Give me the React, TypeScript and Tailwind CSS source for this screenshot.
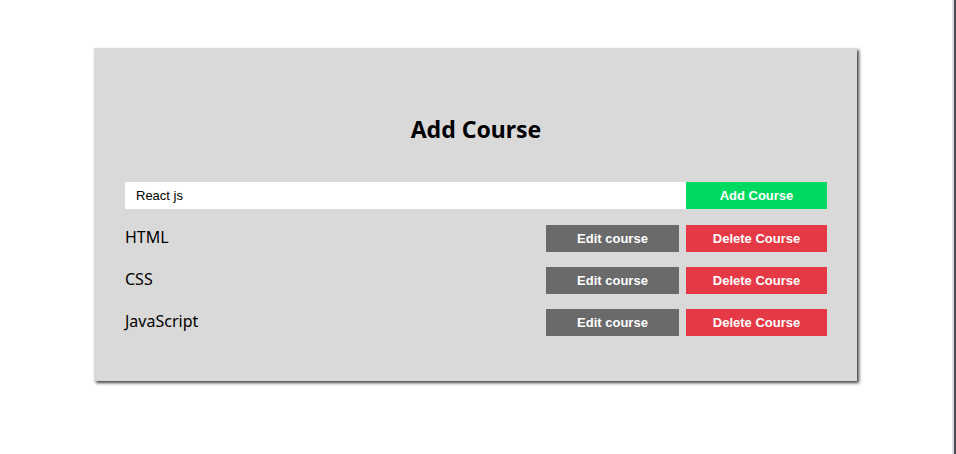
const courses = ['HTML', 'CSS', 'JavaScript'];

export default function App() {
  return (
    <div className="flex min-h-[454px] bg-white">
      <div className="flex-1 pt-[48px]">
        <div className="ml-[94px] w-[763px] bg-[#d9d9d9] pl-[31px] pr-[30px] pt-[65px] pb-[45px] shadow-[2px_2px_3px_rgba(0,0,0,0.75)]">
          <h1 className="text-center text-[23px] leading-[32px] font-bold text-black [font-family:'Noto_Sans',sans-serif]">
            Add Course
          </h1>
          <div className="mt-[37px] flex h-[27px]">
            <input
              className="h-[27px] flex-1 bg-white px-[11px] text-[13px] text-black outline-none [font-family:'Liberation_Sans',Arial,sans-serif]"
              defaultValue="React js"
            />
            <button className="h-[27px] w-[141px] bg-[#00d95f] text-[13px] font-bold text-white [font-family:'Liberation_Sans',Arial,sans-serif]">
              Add Course
            </button>
          </div>
          <ul className="mt-[16px] flex flex-col gap-[15px]">
            {courses.map((c) => (
              <li key={c} className="flex h-[27px] items-center">
                <span className="-mt-[3px] flex-1 text-[16px] text-black [font-family:'Noto_Sans',sans-serif]">
                  {c}
                </span>
                <button className="h-[27px] w-[133px] bg-[#6a6a6a] text-[13px] font-bold text-white [font-family:'Liberation_Sans',Arial,sans-serif]">
                  Edit course
                </button>
                <button className="ml-[7px] h-[27px] w-[141px] bg-[#e63946] text-[13px] font-bold text-white [font-family:'Liberation_Sans',Arial,sans-serif]">
                  Delete Course
                </button>
              </li>
            ))}
          </ul>
        </div>
      </div>
      <div className="w-[2px] bg-[#dcdce2]" />
      <div className="w-[2px] bg-[#4a4a52]" />
    </div>
  );
}
